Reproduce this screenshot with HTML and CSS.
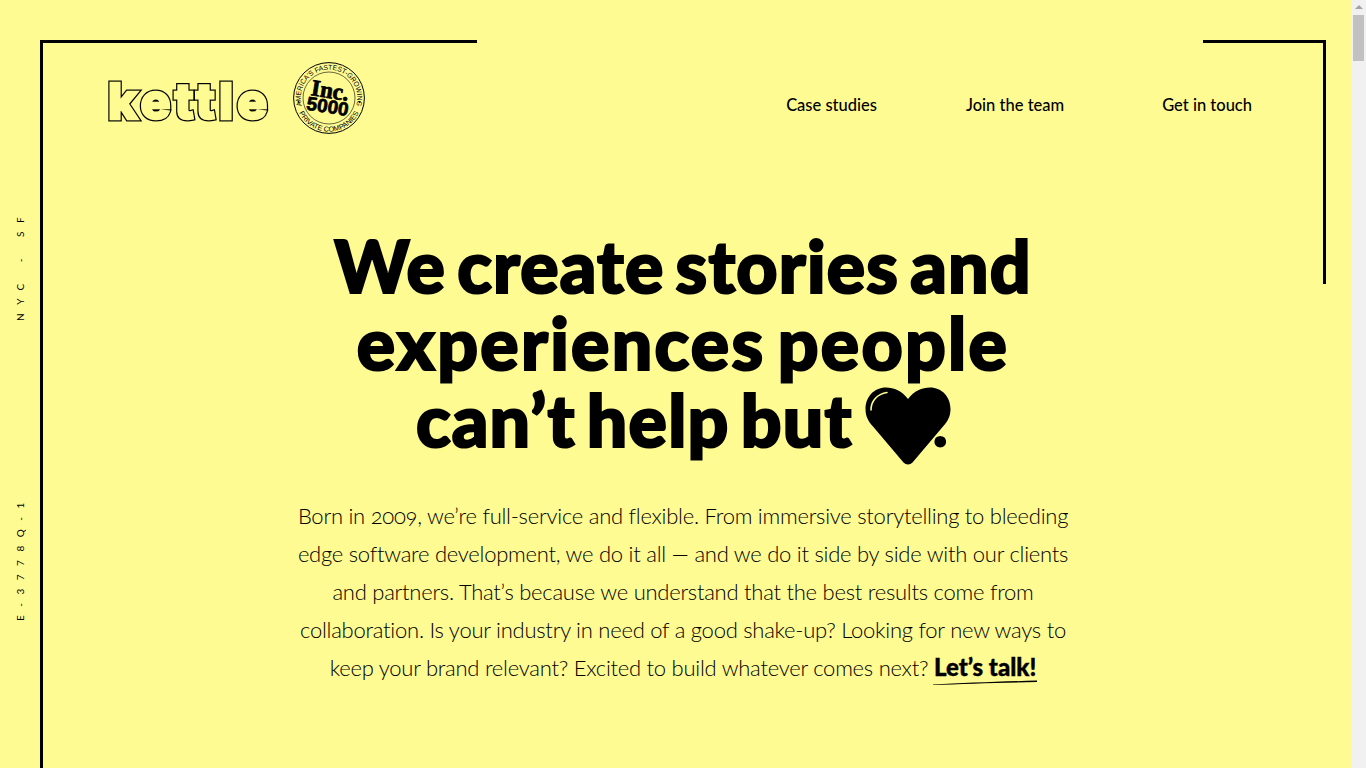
FILE: index.html
```html
<!DOCTYPE html>
<html lang="en">

<head>
    <meta charset="UTF-8">
    <meta name="viewport" content="width=device-width, initial-scale=1.0">
    <title>Kettle</title>
    <link rel="stylesheet" href="styles.css">
</head>

<body>
    <div class="page">
        <aside class="rail">
            <span class="rail-text rail-city">NYC - SF</span>
            <span class="rail-text rail-code">E-3778Q-1</span>
        </aside>

        <main class="frame">
            <header class="top">
                <div class="brand">
                    <a class="logo" href="#" data-text="kettle">kettle</a>
                    <svg class="badge" viewBox="0 0 72 72" width="72" height="72">
                        <defs>
                            <path id="ringTop" d="M9.500 46A28.300 28.300 0 1 1 62.500 46"></path>
                            <path id="ringBottom" d="M3 40A33.200 33.200 0 0 0 69 40"></path>
                        </defs>
                        <circle cx="36" cy="36" r="35.400" fill="none" stroke="#000" stroke-width="1"></circle>
                        <circle cx="36" cy="36" r="26" fill="none" stroke="#000" stroke-width="0.600"></circle>
                        <text class="badge-ring"><textPath href="#ringTop" startOffset="50%" text-anchor="middle" textLength="104" lengthAdjust="spacingAndGlyphs">AMERICA'S FASTEST-GROWING</textPath></text>
                        <text class="badge-ring"><textPath href="#ringBottom" startOffset="50%" text-anchor="middle">PRIVATE COMPANIES</textPath></text>
                        <circle cx="5.500" cy="40" r="1" fill="#000"></circle>
                        <circle cx="66.500" cy="40" r="1" fill="#000"></circle>
                        <g transform="rotate(9 36 36)">
                            <text class="badge-inc" x="36" y="36" text-anchor="middle">Inc.</text>
                            <text class="badge-num" x="36" y="51" text-anchor="middle">5000</text>
                        </g>
                    </svg>
                </div>
                <nav class="nav">
                    <a href="#">Case studies</a>
                    <a href="#">Join the team</a>
                    <a class="nav-last" href="#">Get in touch</a>
                </nav>
            </header>

            <section class="hero">
                <h1>We create stories and<br><span class="line-wide">experiences people</span><br>can’t help but <svg class="heart" viewBox="0 0 86 78" width="86" height="78">
                        <path d="M43 12C37 4 29 0.500 21 0.500 9 0.500 0.500 10 0.500 22 0.500 29 3 34 8 39.500L38.500 75.500C41 78 45 78 47.500 75.500L78 39.500C83 34 85.500 29 85.500 22 85.500 10 77 0.500 65 0.500 57 0.500 49 4 43 12Z" fill="#000"></path>
                        <path d="M6 23C6 14 12 7 22 5.500" fill="none" stroke="#fffb93" stroke-width="1.600" stroke-linecap="round"></path>
                    </svg><span class="dot">.</span></h1>
                <p>Born in 2009, we’re full-service and flexible. From immersive storytelling to bleeding<br>
                    edge software development, we do it all — and we do it side by side with our clients<br>
                    and partners. That’s because we understand that the best results come from<br>
                    collaboration. Is your industry in need of a good shake-up? Looking for new ways to<br>
                    keep your brand relevant? Excited to build whatever comes next? <a class="talk" href="#">Let’s talk!<svg class="swoosh" viewBox="0 0 104 5" width="104" height="5" preserveAspectRatio="none"><path d="M0 4.500C30 3 70 1.500 104 0.500V2C70 2.600 30 3.800 0 5Z" fill="#000"></path></svg></a></p>
            </section>
        </main>
    </div>

    <div class="scrollbar">
        <span class="scroll-arrow"></span>
        <span class="scroll-thumb"></span>
    </div>
</body>

</html>
```

FILE: styles.css
```css
html,
body {
    height: 100%;
}

body {
    display: flex;
    margin: 0;
    height: 768px;
    overflow: hidden;
    background-color: #fffb93;
    color: #000;
    font-family: Lato, Arial, sans-serif;
}

a {
    color: inherit;
    text-decoration: none;
}

.page {
    display: flex;
    flex: 1;
    min-width: 0;
}

/* left rail with the turned text */
.rail {
    display: flex;
    flex-direction: column;
    align-items: center;
    width: 40px;
}

.rail-text {
    writing-mode: vertical-rl;
    transform: rotate(180deg);
    font-size: 10px;
    letter-spacing: 8.500px;
    white-space: pre;
    line-height: 1;
    height: 106px;
    text-align: left;
}

.rail-city {
    margin-top: 215px;
    word-spacing: 2px;
}

.rail-code {
    margin-top: 181px;
    height: 119px;
}

/* frame lines, the top one has a gap */
.frame {
    position: relative;
    box-sizing: border-box;
    width: 1286px;
    margin-top: 40px;
    height: 728px;
    overflow: hidden;
    border-left: 3px solid #000;
}

.frame::before {
    content: "";
    position: absolute;
    top: 0;
    left: 0;
    width: 434px;
    height: 3px;
    background-color: #000;
}

.frame::after {
    content: "";
    position: absolute;
    top: 0;
    right: 0;
    box-sizing: border-box;
    width: 123px;
    height: 244px;
    border-top: 3px solid #000;
    border-right: 3px solid #000;
}

.top {
    display: flex;
    justify-content: space-between;
    align-items: flex-start;
    padding: 22px 74px 0 65px;
}

.brand {
    display: flex;
    align-items: flex-start;
    gap: 25px;
}

/* outline made of two stroked layers so the letters stay fat */
.logo {
    position: relative;
    display: block;
    width: 160px;
    padding-top: 3px;
    font-family: Inter, Lato, sans-serif;
    font-size: 50px;
    font-weight: 800;
    line-height: 72px;
    letter-spacing: 4px;
    text-align: center;
    white-space: nowrap;
    color: #000;
    -webkit-text-stroke: 5px #000;
}

.logo::after {
    content: attr(data-text);
    position: absolute;
    top: 3px;
    left: 0;
    width: 100%;
    color: #fffb93;
    -webkit-text-stroke: 2.500px #fffb93;
}

.badge {
    display: block;
}

.badge-ring {
    font-family: "Liberation Sans", Arial, sans-serif;
    font-size: 7.200px;
    fill: #000;
}

.badge-inc {
    font-family: "Liberation Serif", serif;
    font-size: 23px;
    font-weight: 700;
    fill: #000;
    stroke: #000;
    stroke-width: 0.800px;
}

.badge-num {
    font-family: "Liberation Sans", Arial, sans-serif;
    font-size: 19px;
    font-weight: 700;
    fill: #000;
    stroke: #000;
    stroke-width: 0.700px;
}

.nav {
    display: flex;
    gap: 89px;
    padding-top: 31px;
    font-size: 16.500px;
    line-height: 24px;
    font-weight: 500;
}

.nav-last {
    margin-left: 9px;
}

.hero {
    margin: 90px 0 0 -3px;
    text-align: center;
}

h1 {
    margin: 0;
    font-size: 71.500px;
    font-weight: 900;
    line-height: 77px;
    letter-spacing: 1.200px;
    word-spacing: -7px;
    -webkit-text-stroke: 2.200px #000;
}

.line-wide {
    letter-spacing: 2.300px;
}

.heart {
    vertical-align: -18px;
    margin-left: 1px;
}

.dot {
    margin-left: -19px;
    -webkit-text-stroke: 0;
}

.hero p {
    margin: 32px 0 0;
    font-size: 22px;
    font-weight: 300;
    line-height: 38px;
    letter-spacing: -0.250px;
    font-variant-numeric: oldstyle-nums;
}

.talk {
    position: relative;
    display: inline-block;
    font-size: 24px;
    font-weight: 900;
    line-height: 30px;
    letter-spacing: 0;
    -webkit-text-stroke: 0.400px #000;
}

.swoosh {
    position: absolute;
    left: -1px;
    bottom: -3px;
}

.scrollbar {
    flex: none;
    width: 14px;
    background-color: #f1f1f1;
}

.scroll-arrow {
    display: block;
    width: 0;
    margin: 5px auto 0;
    border-left: 4px solid transparent;
    border-right: 4px solid transparent;
    border-bottom: 4px solid #a3a3a3;
}

.scroll-thumb {
    display: block;
    width: 11px;
    height: 46px;
    margin: 6px 0 0 1px;
    background-color: #c1c1c1;
}
```
